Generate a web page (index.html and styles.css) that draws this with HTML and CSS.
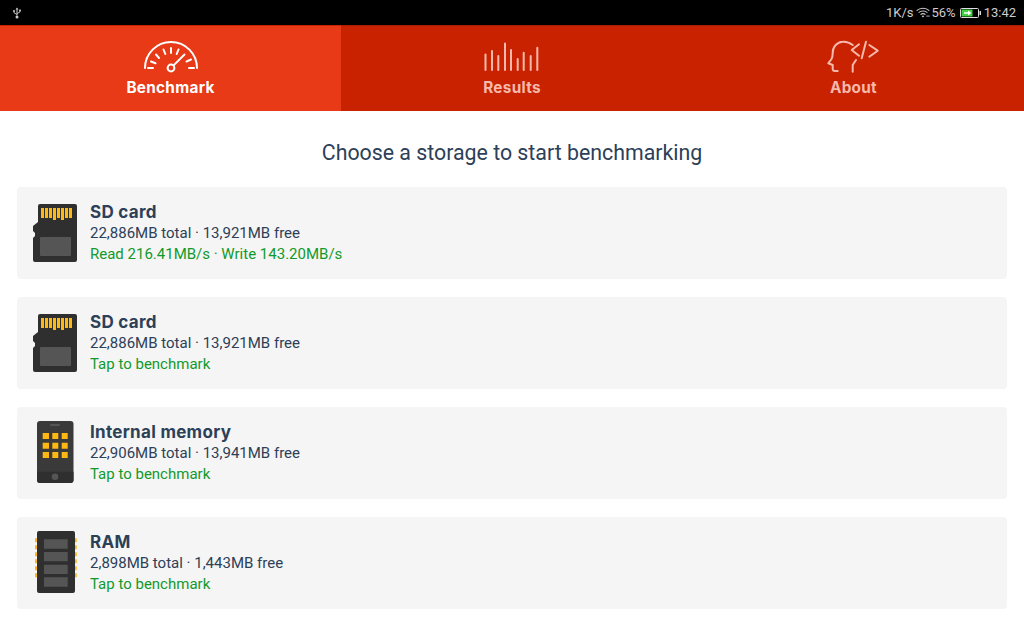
FILE: index.html
```html
<!DOCTYPE html>
<html lang="en">

<head>
    <meta charset="UTF-8">
    <meta name="viewport" content="width=device-width, initial-scale=1.0">
    <title>Storage Benchmark</title>
    <link rel="stylesheet" href="styles.css">
</head>

<body>

    <div class="status-bar">
        <svg class="usb-icon" viewBox="0 0 10 12" width="10" height="12">
            <path d="M5 0.5 L6.5 2.5 H5.5 V8.5 H4.5 V2.5 H3.5 Z" fill="#ccc"/>
            <path d="M5 7.5 L2 5.8 V4.5 M5 6.5 L8 5 V3.8" fill="none" stroke="#ccc" stroke-width="0.9"/>
            <circle cx="2" cy="4" r="1" fill="#ccc"/>
            <rect x="7.1" y="2.6" width="1.8" height="1.6" fill="#ccc"/>
            <circle cx="5" cy="10" r="1.5" fill="#ccc"/>
        </svg>
        <div class="status-right">
            <span>1K/s</span>
            <svg class="wifi-icon" viewBox="0 0 14 11" width="14" height="11">
                <path d="M0.7 3.6 C4.2 0.4 9.8 0.4 13.3 3.6 M2.6 5.6 C5 3.5 9 3.5 11.4 5.6 M4.5 7.6 C5.9 6.5 8.1 6.5 9.5 7.6" fill="none" stroke="#ccc" stroke-width="1.1"/>
                <path d="M7 10.6 L5.6 9.1 C6.4 8.6 7.6 8.6 8.4 9.1 Z" fill="#ccc"/>
                <rect x="10.5" y="8.5" width="1.2" height="1.2" fill="#ccc"/>
                <rect x="12.3" y="8.5" width="1.2" height="1.2" fill="#ccc"/>
            </svg>
            <span class="status-pct">56%</span>
            <svg class="battery-icon" viewBox="0 0 21 10" width="21" height="10">
                <rect x="0.5" y="0.5" width="18" height="9" rx="1" fill="none" stroke="#ddd"/>
                <rect x="1.5" y="1.5" width="11" height="7" fill="#3fd43f"/>
                <rect x="19.5" y="3" width="1.5" height="4" fill="#ddd"/>
                <path d="M4 4.2 H8 V2.6 L11.5 5 L8 7.4 V5.8 H4 Z" fill="#fff"/>
            </svg>
            <span class="status-time">13:42</span>
        </div>
    </div>

    <nav class="tabs">
        <div class="tab active">
            <svg class="tab-icon" viewBox="0 0 60 34" width="60" height="34">
                <path d="M4 29 A26 26 0 0 1 56 29" fill="none"/>
                <path d="M7 29 H12 M10 22.5 L14.5 24.3 M15 15.5 L18 19 M22.5 10.5 L24.3 15 M30 9 V14 M37.5 10.5 L35.7 15 M45.5 22.5 L50 20.5 M48 29 H53"/>
                <path d="M32.6 26.4 L43.5 15.5"/>
                <circle cx="30" cy="29" r="3.4" fill="none"/>
            </svg>
            <span class="tab-label">Benchmark</span>
        </div>
        <div class="tab">
            <svg class="tab-icon" viewBox="0 0 60 34" width="60" height="34">
                <path d="M3.5 31 V15.5 M10 31 V12 M16.300 31 V17 M23 31 V4.500 M29 31 V11 M35.700 31 V20 M41.700 31 V13.700 M48.700 31 V17 M55.300 31 V8.700"/>
            </svg>
            <span class="tab-label">Results</span>
        </div>
        <div class="tab">
            <svg class="tab-icon" viewBox="0 0 60 34" width="60" height="34">
                <path d="M28.700 6 C25 3 21.500 2.500 18.700 2.700 C12.500 3 8.500 8.500 8.700 14.300 C8.700 17 8.700 18 7.500 20 L4.300 24.300 L8.700 26 V30 C8.700 31.500 9.500 32 11 32 H13.700" fill="none"/>
                <path d="M32 21 L28.700 26 V32.700" fill="none"/>
                <path d="M35 5.300 L27.700 11 L35 16.700 M42 2.700 L37.700 19.300 M45.300 6 L53.700 11.700 L45.300 17.700" fill="none"/>
            </svg>
            <span class="tab-label">About</span>
        </div>
    </nav>

    <main class="content">
        <h1 class="page-title">Choose a storage to start benchmarking</h1>

        <div class="storage-list">
            <div class="storage-card">
                <svg class="storage-icon" viewBox="0 0 46 60" width="46" height="60">
                    <path class="chip-body" d="M8 1 H43 A2 2 0 0 1 45 3 V57 A2 2 0 0 1 43 59 H3 A2 2 0 0 1 1 57 V35 L3 33 V30 L1 28 V23 L6 19 V3 A2 2 0 0 1 8 1 Z"/>
                    <path class="chip-gold" d="M9 5 H12 V15 H9 Z M13 5 H16 V15 H13 Z M17 5 H20 V15 H17 Z M21 5 H24 V17 H21 Z M25 5 H28 V15 H25 Z M29 5 H32 V17 H29 Z M33 5 H36 V15 H33 Z M37 5 H40 V15 H37 Z"/>
                    <rect class="chip-grey" x="8" y="34" width="31" height="19" rx="1"/>
                </svg>
                <div class="storage-info">
                    <div class="storage-name">SD card</div>
                    <div class="storage-size">22,886MB total · 13,921MB free</div>
                    <div class="storage-state">Read 216.41MB/s · Write 143.20MB/s</div>
                </div>
            </div>

            <div class="storage-card">
                <svg class="storage-icon" viewBox="0 0 46 60" width="46" height="60">
                    <path class="chip-body" d="M8 1 H43 A2 2 0 0 1 45 3 V57 A2 2 0 0 1 43 59 H3 A2 2 0 0 1 1 57 V35 L3 33 V30 L1 28 V23 L6 19 V3 A2 2 0 0 1 8 1 Z"/>
                    <path class="chip-gold" d="M9 5 H12 V15 H9 Z M13 5 H16 V15 H13 Z M17 5 H20 V15 H17 Z M21 5 H24 V17 H21 Z M25 5 H28 V15 H25 Z M29 5 H32 V17 H29 Z M33 5 H36 V15 H33 Z M37 5 H40 V15 H37 Z"/>
                    <rect class="chip-grey" x="8" y="34" width="31" height="19" rx="1"/>
                </svg>
                <div class="storage-info">
                    <div class="storage-name">SD card</div>
                    <div class="storage-size">22,886MB total · 13,921MB free</div>
                    <div class="storage-state">Tap to benchmark</div>
                </div>
            </div>

            <div class="storage-card">
                <svg class="storage-icon" viewBox="0 0 46 60" width="46" height="60">
                    <rect class="phone-body" x="5" y="-2" width="36.500" height="62" rx="3"/>
                    <path class="chip-body" d="M5 48.700 H41.500 V57 A3 3 0 0 1 38.500 60 H8 A3 3 0 0 1 5 57 Z"/>
                    <rect class="chip-grey" x="18" y="1" width="10" height="2" rx="1"/>
                    <circle class="chip-grey" cx="23" cy="53.700" r="3.300"/>
                    <path class="chip-gold" d="M10.700 10 H17 V16 H10.700 Z M20.300 10 H26.300 V16 H20.300 Z M29.700 10 H35.700 V16 H29.700 Z M10.700 19.700 H17 V25.700 H10.700 Z M20.300 19.700 H26.300 V25.700 H20.300 Z M29.700 19.700 H35.700 V25.700 H29.700 Z M10.700 29 H17 V35 H10.700 Z M20.300 29 H26.300 V35 H20.300 Z M29.700 29 H35.700 V35 H29.700 Z"/>
                </svg>
                <div class="storage-info">
                    <div class="storage-name">Internal memory</div>
                    <div class="storage-size">22,906MB total · 13,941MB free</div>
                    <div class="storage-state">Tap to benchmark</div>
                </div>
            </div>

            <div class="storage-card">
                <svg class="storage-icon" viewBox="0 0 46 60" width="46" height="60">
                    <path class="chip-gold" d="M3 5.300 H6 V9.300 H3 Z M3 12.300 H6 V16.300 H3 Z M3 19.300 H6 V23.300 H3 Z M3 26.300 H6 V30.300 H3 Z M3 33.300 H6 V37.300 H3 Z M3 40.300 H6 V44.300 H3 Z M42 5.300 H44.700 V9.300 H42 Z M42 12.300 H44.700 V16.300 H42 Z M42 19.300 H44.700 V23.300 H42 Z M42 26.300 H44.700 V30.300 H42 Z M42 33.300 H44.700 V37.300 H42 Z M42 40.300 H44.700 V44.300 H42 Z"/>
                    <rect class="chip-body" x="5" y="-2" width="38" height="62" rx="2"/>
                    <path class="chip-grey" d="M12 6.300 H35.700 V15.700 H12 Z M12 19 H35.700 V28.300 H12 Z M12 31.700 H35.700 V41 H12 Z M12 44.300 H35.700 V53.700 H12 Z"/>
                </svg>
                <div class="storage-info">
                    <div class="storage-name">RAM</div>
                    <div class="storage-size">2,898MB total · 1,443MB free</div>
                    <div class="storage-state">Tap to benchmark</div>
                </div>
            </div>
        </div>
    </main>

</body>

</html>
```

FILE: styles.css
```css
* {
    box-sizing: border-box;
}

body {
    margin: 0;
    font-family: Roboto, sans-serif;
    background: #fff;
    height: 100vh;
    overflow: hidden;
}

/* Status bar */
.status-bar {
    height: 25px;
    background: #000;
    color: #ccc;
    font-size: 13px;
    display: flex;
    align-items: center;
    justify-content: space-between;
    padding: 0 8px 0 12px;
}

.status-right {
    display: flex;
    align-items: center;
    gap: 3px;
}

.status-pct {
    margin-left: -2px;
    margin-right: 1px;
}

.usb-icon {
    display: block;
}

/* Tabs */
.tabs {
    display: grid;
    grid-template-columns: 341px 1fr 341px;
    height: 86px;
}

.tab {
    background: #c92200;
    color: #f5b9ab;
    display: flex;
    flex-direction: column;
    align-items: center;
    padding-top: 13px;
    border-top: 1px solid #a81c00;
}

.tab.active {
    background: #e83a17;
    color: #fff;
    border-top-color: #c92200;
}

.tab-icon {
    display: block;
    fill: none;
    stroke: currentColor;
    stroke-width: 2;
    stroke-linecap: round;
    stroke-linejoin: round;
}

.tab-label {
    font-family: Inter, sans-serif;
    font-weight: 700;
    font-size: 15.300px;
    letter-spacing: 0.300px;
    line-height: 18px;
    margin-top: 6px;
}

/* Content */
.content {
    padding: 0 17px;
}

.page-title {
    margin: 0;
    font-weight: 400;
    font-size: 21.330px;
    line-height: 25px;
    padding-top: 29px;
    padding-bottom: 22px;
    text-align: center;
    color: #2c4058;
}

.storage-list {
    display: flex;
    flex-direction: column;
    gap: 18px;
}

.storage-card {
    height: 92px;
    background: #f5f5f5;
    border-radius: 4px;
    display: flex;
    align-items: center;
    gap: 12px;
    padding-left: 15px;
}

.storage-icon {
    display: block;
    flex: none;
    overflow: visible;
}

.chip-body {
    fill: #2f2f2f;
}

.phone-body {
    fill: #3a3a3a;
}

.chip-gold {
    fill: #fdb813;
}

.chip-grey {
    fill: #555;
}

.storage-info {
    padding-top: 1px;
}

.storage-name {
    font-family: Inter, sans-serif;
    font-weight: 700;
    font-size: 17px;
    letter-spacing: 0.300px;
    line-height: 21px;
    color: #2c4058;
}

.storage-size,
.storage-state {
    font-size: 15px;
    line-height: 21px;
    color: #2c4058;
}

.storage-state {
    color: #119a2b;
}
```
